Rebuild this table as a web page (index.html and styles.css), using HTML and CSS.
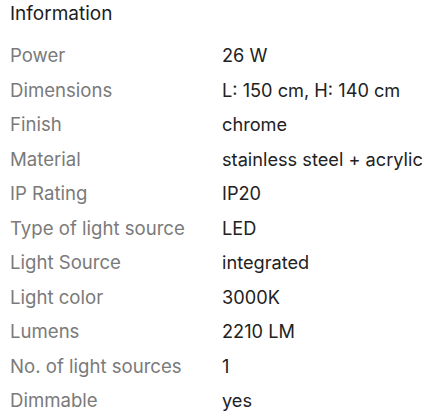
FILE: index.html
```html
<!DOCTYPE html>
<html>
<head>
<meta charset="utf-8">
<link rel="stylesheet" href="styles.css">
</head>
<body>
<section class="info">
  <h2 class="info-title">Information</h2>
  <dl class="spec-list">
    <dt>Power</dt><dd>26 W</dd>
    <dt>Dimensions</dt><dd>L: 150 cm, H: 140 cm</dd>
    <dt>Finish</dt><dd>chrome</dd>
    <dt>Material</dt><dd>stainless steel + acrylic</dd>
    <dt>IP Rating</dt><dd>IP20</dd>
    <dt>Type of light source</dt><dd>LED</dd>
    <dt>Light Source</dt><dd>integrated</dd>
    <dt>Light color</dt><dd>3000K</dd>
    <dt>Lumens</dt><dd>2210 LM</dd>
    <dt>No. of light sources</dt><dd>1</dd>
    <dt>Dimmable</dt><dd>yes</dd>
  </dl>
</section>
</body>
</html>
```
FILE: styles.css
```css
html, body {
  margin: 0;
  padding: 0;
  background: #fff;
}
body {
  font-family: "Inter", "Noto Sans", sans-serif;
  font-size: 18.4px;
}
.info {
  padding: 0 10px;
}
.info-title {
  margin: 0;
  font-size: 19px;
  font-weight: 400;
  line-height: 28px;
  color: #1c1c1c;
}
.spec-list {
  margin: 10px 0 0;
  display: grid;
  grid-template-columns: 212px 1fr;
  grid-auto-rows: 34.5px;
  align-items: center;
}
.spec-list dt,
.spec-list dd {
  margin: 0;
  line-height: 34.5px;
  white-space: nowrap;
}
.spec-list dt {
  font-size: 18.6px;
  color: #7a7a7a;
}
.spec-list dd {
  font-size: 18.2px;
  color: #222;
}
```
